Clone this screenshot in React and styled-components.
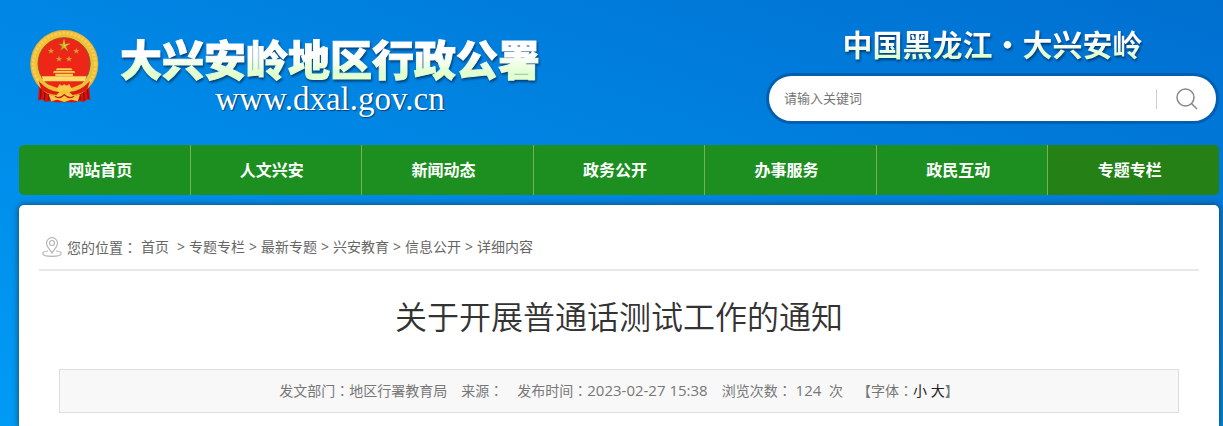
import React from "react";
import styled, { createGlobalStyle } from "styled-components";

const GlobalStyle = createGlobalStyle`
  * {
    box-sizing: border-box;
  }

  body {
    margin: 0;
    color: #666;
    font: 14px/20px "Open Sans", "Noto Sans CJK SC", sans-serif;
    background: #0090ee;
  }

  a {
    color: inherit;
    text-decoration: none;
  }
`;

const Page = styled.div`
  min-height: 100vh;
  padding: 0 4px 0 19px;
  display: flex;
  flex-direction: column;
  background: linear-gradient(to top right, #009bf5, #0086e4 50%, #006fd0);
`;

const Header = styled.header`
  display: flex;
  justify-content: space-between;
  align-items: flex-start;
  height: 145px;
`;

const Brand = styled.a`
  display: flex;
  gap: 20px;
  padding: 30px 0 0 11px;
`;

const BrandText = styled.div`
  display: flex;
  flex-direction: column;
  align-items: center;
  gap: 3px;
  padding-top: 4px;
`;

const GradientText = styled.span`
  color: transparent;
  background: linear-gradient(#fff 45%, #e2ffd0 80%);
  background-clip: text;
  filter: drop-shadow(1px 2px 1px rgba(0, 30, 70, 0.65));
  white-space: nowrap;
`;

const SiteName = styled(GradientText)`
  font: 900 42px/48px "Noto Sans CJK SC", sans-serif;
  -webkit-text-stroke: 1px transparent;
`;

const SiteUrl = styled.span`
  color: #fff;
  font: 33px/28px "Liberation Serif", serif;
  text-shadow: 1px 1px 1px rgba(0, 30, 70, 0.7);
`;

const HeaderSide = styled.div`
  display: flex;
  flex-direction: column;
  align-items: center;
  width: 453px;
  padding-top: 21px;
`;

const Region = styled(GradientText)`
  font: 700 30px/44px "Noto Sans CJK SC", sans-serif;
`;

const SearchForm = styled.form`
  display: flex;
  align-items: center;
  width: 100%;
  height: 51px;
  margin-top: 8px;
  border: 3px solid #005fb0;
  border-radius: 26px;
  background: #fff;
`;

const SearchInput = styled.input`
  flex: 1;
  min-width: 0;
  height: 45px;
  padding: 0 15px 2px;
  border: 0;
  outline: 0;
  background: none;
  color: #757575;
  font: 13px/20px "Open Sans", "Noto Sans CJK SC", sans-serif;

  &::placeholder {
    color: #757575;
  }
`;

const SearchButton = styled.button`
  display: flex;
  align-items: center;
  justify-content: center;
  width: 60px;
  height: 20px;
  padding: 0;
  border: 0;
  border-left: 1px solid #ccc;
  background: none;
  cursor: pointer;
`;

const Nav = styled.nav`
  display: flex;
  height: 50px;
  border-radius: 5px;
  overflow: hidden;
  background: #1c8f20;
`;

const NavLink = styled.a`
  flex: 1;
  padding-right: 8px;
  color: #fff;
  font-size: 16px;
  font-weight: 700;
  line-height: 50px;
  text-align: center;
  background: ${(props) => (props.$active ? "#258016" : "transparent")};

  & + & {
    border-left: 1px solid #78b052;
  }
`;

const Panel = styled.main`
  flex: 1;
  margin-top: 10px;
  padding: 20px 20px 14px;
  border-radius: 5px 5px 0 0;
  background: #fff;
  box-shadow: 0 0 6px rgba(40, 40, 40, 0.8);
`;

const Breadcrumb = styled.nav`
  display: flex;
  align-items: center;
  height: 46px;
  padding-left: 3px;
  border-bottom: 2px solid #e8e8e8;
`;

const Crumbs = styled.div`
  display: flex;
  flex-wrap: wrap;
  gap: 0 4px;
  margin-left: 5px;
`;

const HomeLink = styled.a`
  margin-right: 4px;
`;

const Colon = styled.span`
  font-family: "Noto Sans CJK TC", sans-serif;
`;

const Title = styled.h1`
  margin: 22px 0 28px;
  color: #333;
  font-size: 32px;
  font-weight: 350;
  line-height: 48px;
  text-align: center;
`;

const Meta = styled.div`
  display: flex;
  flex-wrap: wrap;
  justify-content: center;
  gap: 0 14px;
  margin: 0 20px;
  padding: 10px 0 11px;
  border: 1px solid #ddd;
  background: #f8f8f8;
  color: #777;
  white-space: pre;
`;

const Figure = styled.span`
  font-size: 15px;
`;

const SizeButton = styled.button`
  padding: 0;
  border: 0;
  background: none;
  color: #222;
  font: inherit;
  cursor: pointer;
`;

const navItems = ["网站首页", "人文兴安", "新闻动态", "政务公开", "办事服务", "政民互动", "专题专栏"];

const crumbs = ["专题专栏", "最新专题", "兴安教育", "信息公开"];

const STAR = "M0 -10 2.4 -3.2 9.5 -3.1 3.8 1.3 5.9 8.1 0 4 -5.9 8.1 -3.8 1.3 -9.5 -3.1 -2.4 -3.2Z";

const smallStars = [
  [63, 63],
  [139, 63],
  [87, 87],
  [117, 87],
];

const Emblem = () => (
  <svg width="70" height="74" viewBox="0 0 210 222" aria-hidden="true">
    <path d="M28 154 24 212 36 208 46 216 64 213 76 217 136 217 146 213 162 216 172 208 181 211 177 154Z" fill="#d4150f" />
    <path d="M34 166 31 207M46 175 43 210M58 181 55 210M171 166 175 207M160 175 163 211M148 181 151 210" stroke="#930b0b" strokeWidth="4" fill="none" />
    <circle cx="103" cy="102" r="90" fill="none" stroke="#f0bf3a" strokeWidth="23" />
    <circle cx="103" cy="102" r="93" fill="none" stroke="#f8cf52" strokeWidth="9" strokeDasharray="7 5" />
    <circle cx="103" cy="102" r="101" fill="none" stroke="#d9a838" strokeWidth="2" />
    <circle cx="102" cy="101" r="78" fill="#ed2617" stroke="#a65716" strokeWidth="3" />
    <path d={STAR} transform="translate(102 47) scale(1.9)" fill="#d9a52a" stroke="#9d5314" />
    <path d="M102 29V47L119 41M102 47 113 62" fill="none" stroke="#f7d65c" strokeWidth="2" />
    {smallStars.map(([x, y]) => (
      <path key={`${x}-${y}`} d={STAR} transform={`translate(${x} ${y})`} fill="#d6a02c" />
    ))}
    <path d="M81 115H124L128 121H77ZM72 123H133L136 129H69ZM76 131H129V138H76Z" fill="#f9cf55" />
    <path d="M35 139H170L164 154H41Z" fill="#ffdc68" />
    <path d="M70 129H135" stroke="#c77a1e" strokeWidth="2" />
    <path d="M52 163 83 174 88 162 97 168 103 162 109 168 118 162 124 174 153 163 142 178 120 189H85L64 178Z" fill="#f2be35" />
    <path d="M26 153Q55 185 88 186L79 195Q50 192 34 178Z M180 153Q150 185 118 186L127 195Q156 192 172 178Z" fill="#dc1b12" />
    <path d="M79 180Q82 167 103 166Q124 167 127 180L116 187Q103 174 90 187Z" fill="#f9cb4a" />
    <path d="M56 194 82 200 103 191 124 200 150 194 143 214 124 209 103 216 82 209 64 214Z" fill="#f3c842" />
    <path d="M75 199Q88 209 103 194Q119 209 132 199" stroke="#cb1c12" strokeWidth="4" fill="none" />
  </svg>
);

const SearchIcon = () => (
  <svg width="22" height="22" viewBox="0 0 22 22" fill="none" stroke="#888" strokeWidth="1.5" aria-hidden="true">
    <circle cx="9.5" cy="9.5" r="8.5" />
    <path d="M15.5 15.5 21 21" />
  </svg>
);

const PinIcon = () => (
  <svg width="20" height="20" viewBox="0 0 20 20" fill="none" stroke="#b5b5b5" strokeWidth="1.2" aria-hidden="true">
    <path d="M10 16C8 12.500 4.500 9.500 4.500 6.200a5.500 5.500 0 0 1 11 0C15.500 9.500 12 12.500 10 16Z" />
    <circle cx="10" cy="6" r="2.500" />
    <path d="M6 14C2.500 14.300.7 15.300.7 16.600.7 18.300 4.700 19.300 10 19.300s9.300-1 9.300-2.700c0-1.300-1.800-2.300-5.300-2.600" />
  </svg>
);

const App = () => {
  return (
    <>
      <GlobalStyle />
      <Page>
        <Header>
          <Brand href="#">
            <Emblem />
            <BrandText>
              <SiteName>大兴安岭地区行政公署</SiteName>
              <SiteUrl>www.dxal.gov.cn</SiteUrl>
            </BrandText>
          </Brand>
          <HeaderSide>
            <Region>中国黑龙江•大兴安岭</Region>
            <SearchForm onSubmit={(e) => e.preventDefault()}>
              <SearchInput type="text" aria-label="请输入关键词" placeholder="请输入关键词" />
              <SearchButton type="submit" aria-label="搜索">
                <SearchIcon />
              </SearchButton>
            </SearchForm>
          </HeaderSide>
        </Header>
        <Nav>
          {navItems.map((item, index) => (
            <NavLink key={item} href="#" $active={index === navItems.length - 1}>
              {item}
            </NavLink>
          ))}
        </Nav>
        <Panel>
          <Breadcrumb>
            <PinIcon />
            <Crumbs>
              <span>您的位置<Colon>：</Colon></span>
              <HomeLink href="#">首页</HomeLink>
              {crumbs.map((item) => (
                <React.Fragment key={item}>
                  <span>&gt;</span>
                  <a href="#">{item}</a>
                </React.Fragment>
              ))}
              <span>&gt;</span>
              <span>详细内容</span>
            </Crumbs>
          </Breadcrumb>
          <Title>关于开展普通话测试工作的通知</Title>
          <Meta>
            <span>发文部门<Colon>：</Colon>地区行署教育局</span>
            <span>来源<Colon>：</Colon></span>
            <span>发布时间<Colon>：</Colon><Figure>2023-02-27 15:38</Figure></span>
            <span>浏览次数<Colon>：</Colon><Figure>{" 124  "}</Figure>次</span>
            <span>
              【字体<Colon>：</Colon>
              <SizeButton type="button">小</SizeButton> <SizeButton type="button">大</SizeButton>】
            </span>
          </Meta>
        </Panel>
      </Page>
    </>
  );
};

export default App;
